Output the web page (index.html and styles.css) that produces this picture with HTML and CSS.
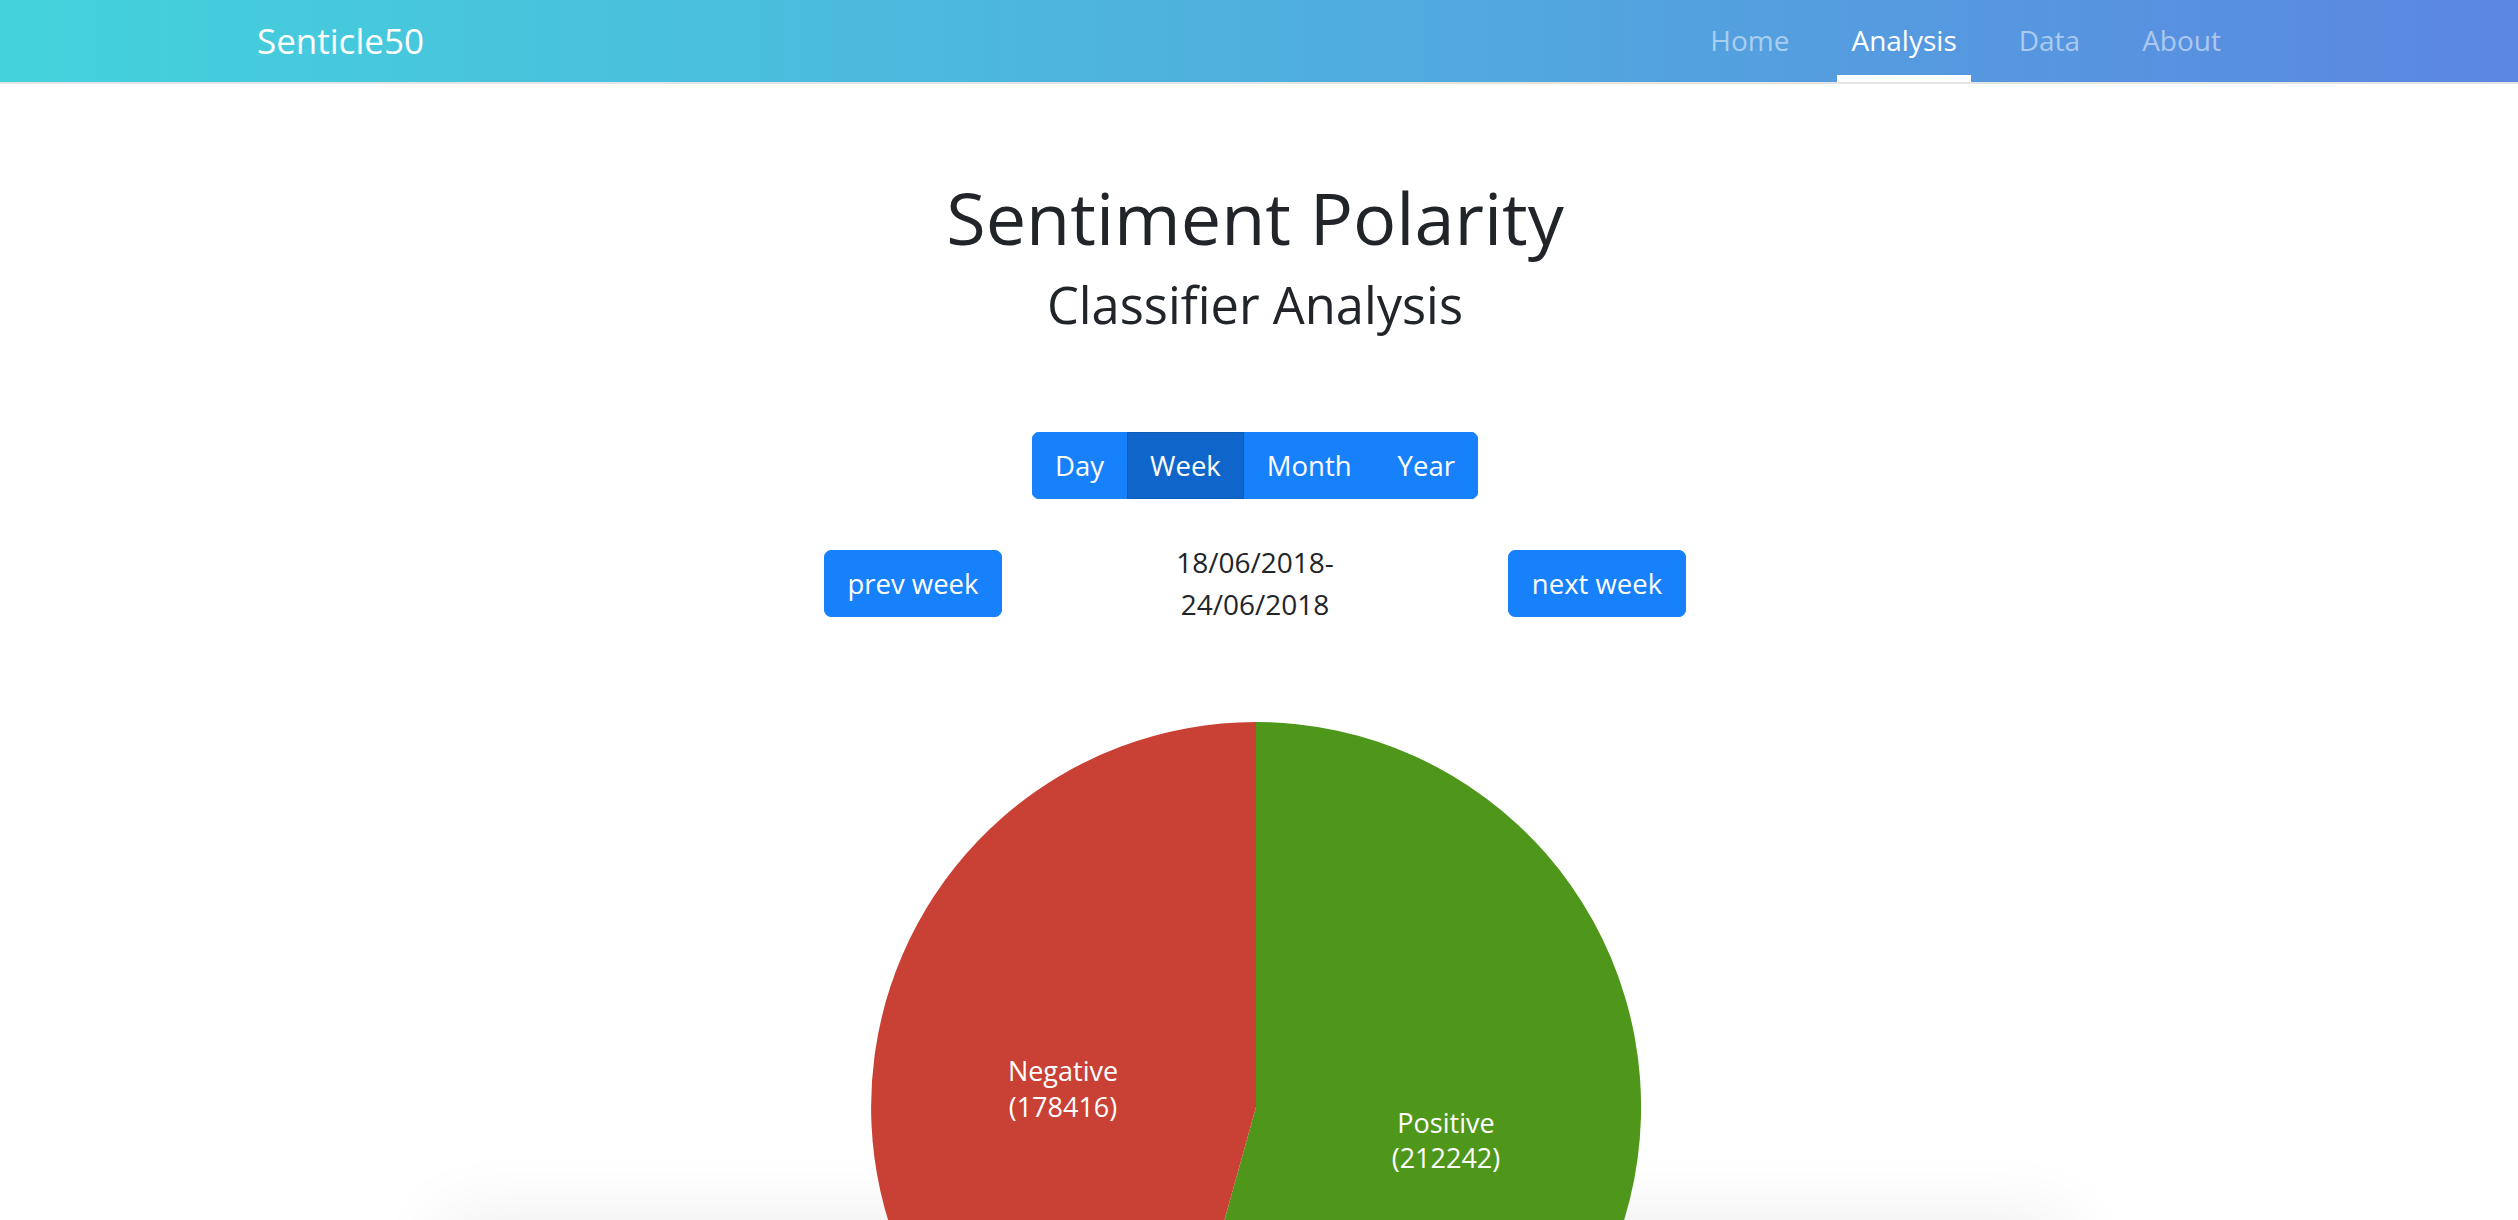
FILE: index.html
```html
<!DOCTYPE html>
<html lang="en">
<head>
<meta charset="utf-8">
<title>Senticle50 - Analysis</title>
<link rel="stylesheet" href="styles.css">
</head>
<body>
<header class="navbar">
  <a class="brand" href="#">Senticle50</a>
  <nav class="nav">
    <a class="nav-link" href="#">Home</a>
    <a class="nav-link active" href="#">Analysis</a>
    <a class="nav-link" href="#">Data</a>
    <a class="nav-link" href="#">About</a>
  </nav>
</header>

<main class="main">
  <h1 class="title">Sentiment Polarity</h1>
  <h2 class="subtitle">Classifier Analysis</h2>

  <div class="btn-group">
    <button class="btn seg">Day</button>
    <button class="btn seg active">Week</button>
    <button class="btn seg">Month</button>
    <button class="btn seg">Year</button>
  </div>

  <div class="period-row">
    <div class="col col-left"><button class="btn solo">prev week</button></div>
    <div class="col col-mid">18/06/2018-24/06/2018</div>
    <div class="col col-right"><button class="btn solo">next week</button></div>
  </div>

  <div class="chart">
    <svg class="pie" width="800" height="900" viewBox="0 0 800 900">
      <g transform="translate(3,0)">
        <path d="M398,442 L398,57 A385,385 0 1,1 294.5,812.8 Z" fill="#4f971b"/>
        <path d="M398,442 L294.5,812.8 A385,385 0 0,1 398,57 Z" fill="#c94135"/>
        <text class="pie-label" x="205" y="416">Negative</text>
        <text class="pie-label" x="205" y="452">(178416)</text>
        <text class="pie-label" x="588" y="468">Positive</text>
        <text class="pie-label" x="588" y="503">(212242)</text>
      </g>
    </svg>
  </div>

  <section class="panel"></section>
</main>
</body>
</html>
```

FILE: styles.css
```css
html, body {
  margin: 0;
  padding: 0;
  background: #ffffff;
}

body {
  font-family: "Open Sans", "Noto Sans", sans-serif;
  color: #212529;
  overflow: hidden;
}

.navbar {
  height: 82px;
  border-bottom: 2px solid #e4e4e4;
  background: linear-gradient(to right, #43d2dc 0%, #4fb0de 50%, #5b86e1 100%);
  display: flex;
  align-items: center;
  justify-content: space-between;
  padding: 0 283px 0 257px;
}

.brand {
  color: #ffffff;
  text-decoration: none;
  font-size: 35px;
  line-height: 1;
  padding-bottom: 2px;
}

.nav {
  display: flex;
  height: 100%;
  gap: 34px;
}

.nav-link {
  display: flex;
  align-items: center;
  padding: 5px 14px 0;
  border-bottom: 7px solid transparent;
  color: rgba(255, 255, 255, 0.5);
  text-decoration: none;
  font-size: 28px;
  box-sizing: border-box;
  height: 100%;
}

.nav-link.active {
  color: #ffffff;
  border-bottom-color: #ffffff;
}

.main {
  display: flex;
  flex-direction: column;
  align-items: center;
  padding-right: 8px;
}

.title {
  margin: 90px 0 0;
  font-size: 72px;
  line-height: 86px;
  font-weight: 400;
}

.subtitle {
  margin: 15px 0 0;
  font-size: 50.6px;
  line-height: 59px;
  font-weight: 400;
}

.btn {
  font-family: "Open Sans", "Noto Sans", sans-serif;
  font-size: 27.5px;
  color: #ffffff;
  background: #1780fb;
  border: 1px solid #1780fb;
  height: 67px;
  padding: 0 24px;
  cursor: pointer;
}

.btn-group {
  margin-top: 98px;
  display: flex;
  border-radius: 7px;
  overflow: hidden;
}

.seg {
  border-radius: 0;
  padding: 0 22px;
}

.seg.active {
  background: #0f65c9;
  border-color: #0d5db8;
}

.period-row {
  margin-top: 42px;
  width: 862px;
  display: grid;
  grid-template-columns: repeat(3, 1fr);
  align-items: center;
}

.col-left {
  display: flex;
  justify-content: flex-start;
}

.col-right {
  display: flex;
  justify-content: flex-end;
}

.col-mid {
  text-align: center;
  font-size: 28px;
  line-height: 42px;
  padding: 0 6px;
}

.solo {
  border-radius: 7px;
  width: 178px;
  padding: 0;
}

.chart {
  margin-top: 40px;
  height: 560px;
  width: 800px;
  position: relative;
  z-index: 1;
}

.pie {
  display: block;
  overflow: visible;
}

.pie-label {
  font-family: "Open Sans", "Noto Sans", sans-serif;
  font-size: 27px;
  fill: #ffffff;
  text-anchor: middle;
}

.panel {
  margin-top: 4px;
  width: 1600px;
  height: 400px;
  background: #ffffff;
  box-shadow: 0 0 70px 12px rgba(0, 0, 0, 0.07);
}
```
